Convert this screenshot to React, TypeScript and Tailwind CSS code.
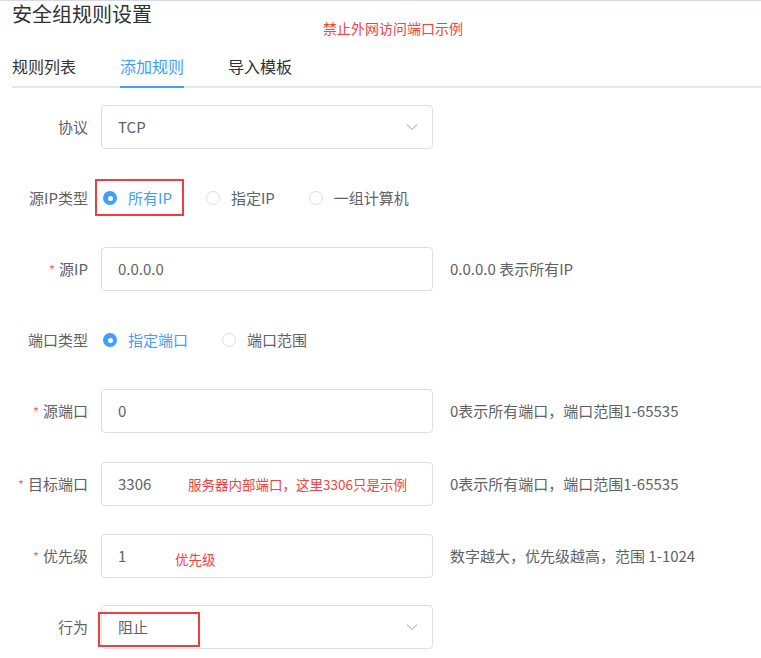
import React from 'react';

const font = { fontFamily: '"Noto Sans CJK SC", "Noto Sans", sans-serif' };

const Chevron = () => (
  <svg width="12" height="8" viewBox="0 0 12 8" className="shrink-0">
    <path d="M1 1.5 L6 6.5 L11 1.5" fill="none" stroke="#c0c4cc" strokeWidth="1.2" />
  </svg>
);

const Radio = ({ checked, label }: { checked?: boolean; label: string }) => (
  <div className="flex items-center gap-[11px]">
    {checked ? (
      <span className="w-[14px] h-[14px] rounded-full bg-[#409eff] flex items-center justify-center">
        <span className="w-[5px] h-[5px] rounded-full bg-white" />
      </span>
    ) : (
      <span className="w-[14px] h-[14px] rounded-full border border-[#dcdfe6] bg-white" />
    )}
    <span className={checked ? 'text-[#409eff]' : 'text-[#606266]'}>{label}</span>
  </div>
);

const Row = ({
  label,
  required,
  className = '',
  children,
}: {
  label: string;
  required?: boolean;
  className?: string;
  children: React.ReactNode;
}) => (
  <div className={`flex items-center h-[44px] ${className}`}>
    <div className="w-[101px] pr-[13px] text-right text-[15px] text-[#606266] shrink-0">
      {required && <span className="text-[#f56c6c] mr-[4px] text-[13px]">*</span>}
      {label}
    </div>
    {children}
  </div>
);

const Box = ({ children, select }: { children: React.ReactNode; select?: boolean }) => (
  <div className="relative w-[332px] h-[44px] border border-[#dcdfe6] rounded-[4px] bg-white flex items-center pl-[16px] pr-[14px] text-[15px] text-[#606266]">
    <div className="flex-1 flex items-center">{children}</div>
    {select && <Chevron />}
  </div>
);

const Help = ({ children }: { children: React.ReactNode }) => (
  <div className="ml-[17px] text-[15px] text-[#606266] whitespace-nowrap">{children}</div>
);

export default function App() {
  return (
    <div className="w-[761px] h-[658px] bg-white border-t border-[#d4dae6] overflow-hidden" style={font}>
      {/* header */}
      <div className="relative pl-3">
        <h1 className="text-[20px] leading-[26px] text-[#303133] font-normal">安全组规则设置</h1>
        <span className="absolute left-[323px] top-[17px] text-[14px] text-[#f5413f]">禁止外网访问端口示例</span>
        <div className="mt-[27px] flex gap-[44px] border-b-2 border-[#e4e7ed] text-[16px] leading-[24px]">
          <div className="pb-[8px] -mb-[2px] border-b-2 border-transparent text-[#303133]">规则列表</div>
          <div className="pb-[8px] -mb-[2px] border-b-2 border-[#409eff] text-[#409eff]">添加规则</div>
          <div className="pb-[8px] -mb-[2px] border-b-2 border-transparent text-[#303133]">导入模板</div>
        </div>
      </div>

      {/* form */}
      <div className="mt-[17px] flex flex-col gap-[27px]">
        <Row label="协议">
          <Box select>TCP</Box>
        </Row>

        <Row label="源IP类型">
          <div className="relative h-[44px] flex items-center gap-[34px] pl-[2px] text-[15px]">
            <Radio checked label="所有IP" />
            <Radio label="指定IP" />
            <Radio label="一组计算机" />
            <span className="absolute -left-[6px] top-[3px] w-[89px] h-[37px] border-2 border-[#f03d3d]" />
          </div>
        </Row>

        <Row label="源IP" required>
          <Box>0.0.0.0</Box>
          <Help>0.0.0.0 表示所有IP</Help>
        </Row>

        <Row label="端口类型">
          <div className="flex items-center gap-[34px] pl-[2px] text-[15px]">
            <Radio checked label="指定端口" />
            <Radio label="端口范围" />
          </div>
        </Row>

        <Row label="源端口" required>
          <Box>0</Box>
          <Help>0表示所有端口，端口范围1-65535</Help>
        </Row>

        <Row label="目标端口" required className="mt-[2px]">
          <Box>
            3306
            <span className="absolute left-[86px] text-[13.5px] text-[#f5413f]">服务器内部端口，这里3306只是示例</span>
          </Box>
          <Help>0表示所有端口，端口范围1-65535</Help>
        </Row>

        <Row label="优先级" required className="mt-[1px]">
          <Box>
            1
            <span className="absolute left-[73px] top-[14px] text-[13.5px] text-[#f5413f]">优先级</span>
          </Box>
          <Help>数字越大，优先级越高，范围 1-1024</Help>
        </Row>

        <Row label="行为">
          <Box select>
            阻止
            <span className="absolute -left-[4px] top-[6px] w-[102px] h-[35px] border-2 border-[#f03d3d]" />
          </Box>
        </Row>
      </div>
    </div>
  );
}
